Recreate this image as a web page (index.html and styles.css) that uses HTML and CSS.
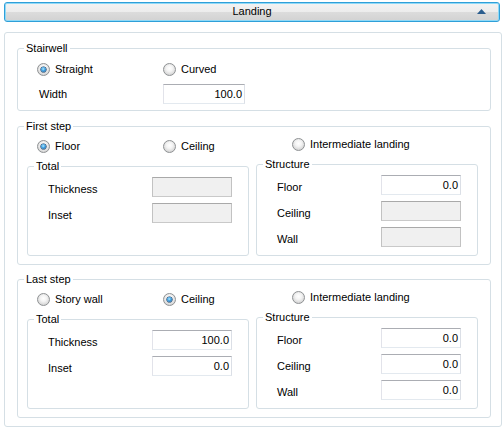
FILE: index.html
```html
<!DOCTYPE html>
<html>
<head>
<meta charset="utf-8">
<title>Landing</title>
<link rel="stylesheet" href="styles.css">
</head>
<body>
<div class="header">
  <span></span>
  <span class="title">Landing</span>
  <svg class="arrow" width="9" height="5" viewBox="0 0 9 5"><polygon points="0,5 9,5 4.5,0" fill="#2b5d8e"/></svg>
</div>
<div class="panel">
  <fieldset class="group stairwell">
    <legend>Stairwell</legend>
    <div class="row">
      <label class="opt"><span class="radio on"></span>Straight</label>
      <label class="opt"><span class="radio"></span>Curved</label>
    </div>
    <div class="row gap">
      <span class="lbl plain">Width</span>
      <span class="field wide">100.0</span>
    </div>
  </fieldset>

  <fieldset class="group step">
    <legend>First step</legend>
    <div class="cols">
      <div class="col left">
        <div class="opts">
          <label class="opt"><span class="radio on"></span>Floor</label>
          <label class="opt"><span class="radio"></span>Ceiling</label>
        </div>
        <fieldset class="group sub">
          <legend>Total</legend>
          <div class="frow"><span class="lbl">Thickness</span><span class="field off"></span></div>
          <div class="frow"><span class="lbl">Inset</span><span class="field off"></span></div>
        </fieldset>
      </div>
      <div class="col right">
        <div class="opts single">
          <label class="opt"><span class="radio"></span>Intermediate landing</label>
        </div>
        <fieldset class="group sub">
          <legend>Structure</legend>
          <div class="frow"><span class="lbl">Floor</span><span class="field">0.0</span></div>
          <div class="frow"><span class="lbl">Ceiling</span><span class="field off"></span></div>
          <div class="frow"><span class="lbl">Wall</span><span class="field off"></span></div>
        </fieldset>
      </div>
    </div>
  </fieldset>

  <fieldset class="group step last">
    <legend>Last step</legend>
    <div class="cols">
      <div class="col left">
        <div class="opts">
          <label class="opt"><span class="radio"></span>Story wall</label>
          <label class="opt"><span class="radio on"></span>Ceiling</label>
        </div>
        <fieldset class="group sub">
          <legend>Total</legend>
          <div class="frow"><span class="lbl">Thickness</span><span class="field">100.0</span></div>
          <div class="frow"><span class="lbl">Inset</span><span class="field">0.0</span></div>
        </fieldset>
      </div>
      <div class="col right">
        <div class="opts single">
          <label class="opt"><span class="radio"></span>Intermediate landing</label>
        </div>
        <fieldset class="group sub">
          <legend>Structure</legend>
          <div class="frow"><span class="lbl">Floor</span><span class="field">0.0</span></div>
          <div class="frow"><span class="lbl">Ceiling</span><span class="field">0.0</span></div>
          <div class="frow"><span class="lbl">Wall</span><span class="field">0.0</span></div>
        </fieldset>
      </div>
    </div>
  </fieldset>
</div>
</body>
</html>
```

FILE: styles.css
```css
* { box-sizing: border-box; }
html, body { margin: 0; padding: 0; }
body {
  width: 504px;
  height: 432px;
  overflow: hidden;
  background: #ffffff;
  font-family: "Liberation Sans", Arial, sans-serif;
  font-size: 11px;
  line-height: 13px;
  color: #000;
}

/* header bar */
.header {
  margin: 2px 4px 0 4px;
  height: 20px;
  border: 1px solid #2f9fd8;
  border-radius: 3px;
  box-shadow: inset 0 0 0 1px #8fd9f7;
  background: linear-gradient(#f3f3f3 0%, #ececec 50%, #dcdcdc 50%, #d2d2d2 100%);
  display: grid;
  grid-template-columns: 1fr auto 1fr;
  align-items: center;
  padding-bottom: 2px;
}
.title { line-height: 16px; }
.arrow { justify-self: end; margin-right: 13px; display: block; }

/* main panel */
.panel {
  margin: 10px 0 0 4px;
  width: 498px;
  border: 1px solid #d5dfe5;
  border-radius: 3px;
  padding: 9px 10px 8px 12px;
}

fieldset.group {
  margin: 0;
  min-width: 0;
  border: 1px solid #d5dfe5;
  border-radius: 3px;
  padding: 0;
}
fieldset.group > legend {
  padding: 0 2px;
  margin-left: 6px;
  line-height: 13px;
}

fieldset.stairwell { padding: 4px 0 6px 19px; }
fieldset.stairwell > legend { margin-left: -13px; }
.row {
  display: grid;
  grid-template-columns: 126px auto;
  height: 20px;
  align-items: center;
}
.row.gap { margin-top: 5px; }
.lbl.plain { padding-left: 2px; }
.field.wide { width: 82px; }

fieldset.step { margin-top: 9px; padding: 1px 12px 8px 9px; }
fieldset.step > legend { margin-left: -3px; }
fieldset.step.last { margin-top: 8px; }

.cols {
  display: grid;
  grid-template-columns: 222px 222px;
  column-gap: 7px;
}
.col { display: flex; flex-direction: column; }
.col.left { padding-top: 2px; }

.opts {
  display: grid;
  grid-template-columns: 126px auto;
  height: 20px;
  align-items: center;
  padding-left: 10px;
}
.opts.single { display: flex; padding-left: 36px; }

fieldset.sub {
  margin-top: 4px;
  flex: 1;
  padding: 4px 0 8px 20px;
}
fieldset.sub > legend { margin-left: -14px; }
.frow {
  display: grid;
  grid-template-columns: 104px 80px;
  height: 20px;
  align-items: center;
}
.frow + .frow { margin-top: 6px; }
.frow .lbl { padding-top: 5px; }

/* radio */
.opt { display: flex; align-items: center; white-space: nowrap; }
.radio {
  position: relative;
  flex: none;
  width: 13px;
  height: 13px;
  margin-right: 5px;
  border-radius: 50%;
  border: 1px solid #8e9193;
  background: radial-gradient(circle at 50% 40%, #ffffff 0%, #f4f4f4 35%, #d6d6d6 75%, #c4c4c4 100%);
}
.radio.on::after {
  content: "";
  position: absolute;
  left: 3px;
  top: 3px;
  width: 5px;
  height: 5px;
  border-radius: 50%;
  background: radial-gradient(circle at 45% 40%, #b6ecff 0%, #3c9ee0 45%, #0f4a82 100%);
  box-shadow: 0 0 0 0.6px #1d3f63;
}

/* text fields */
.field {
  display: block;
  height: 20px;
  border: 1px solid;
  border-color: #abadb3 #dbdfe6 #e3e9ef #e2e3ea;
  background: #ffffff;
  text-align: right;
  padding-right: 2px;
  line-height: 18px;
}
.field.off {
  background: #f0f0f0;
  border-color: #a9a9a9 #c2c2c2 #c9c9c9 #c2c2c2;
}
```
